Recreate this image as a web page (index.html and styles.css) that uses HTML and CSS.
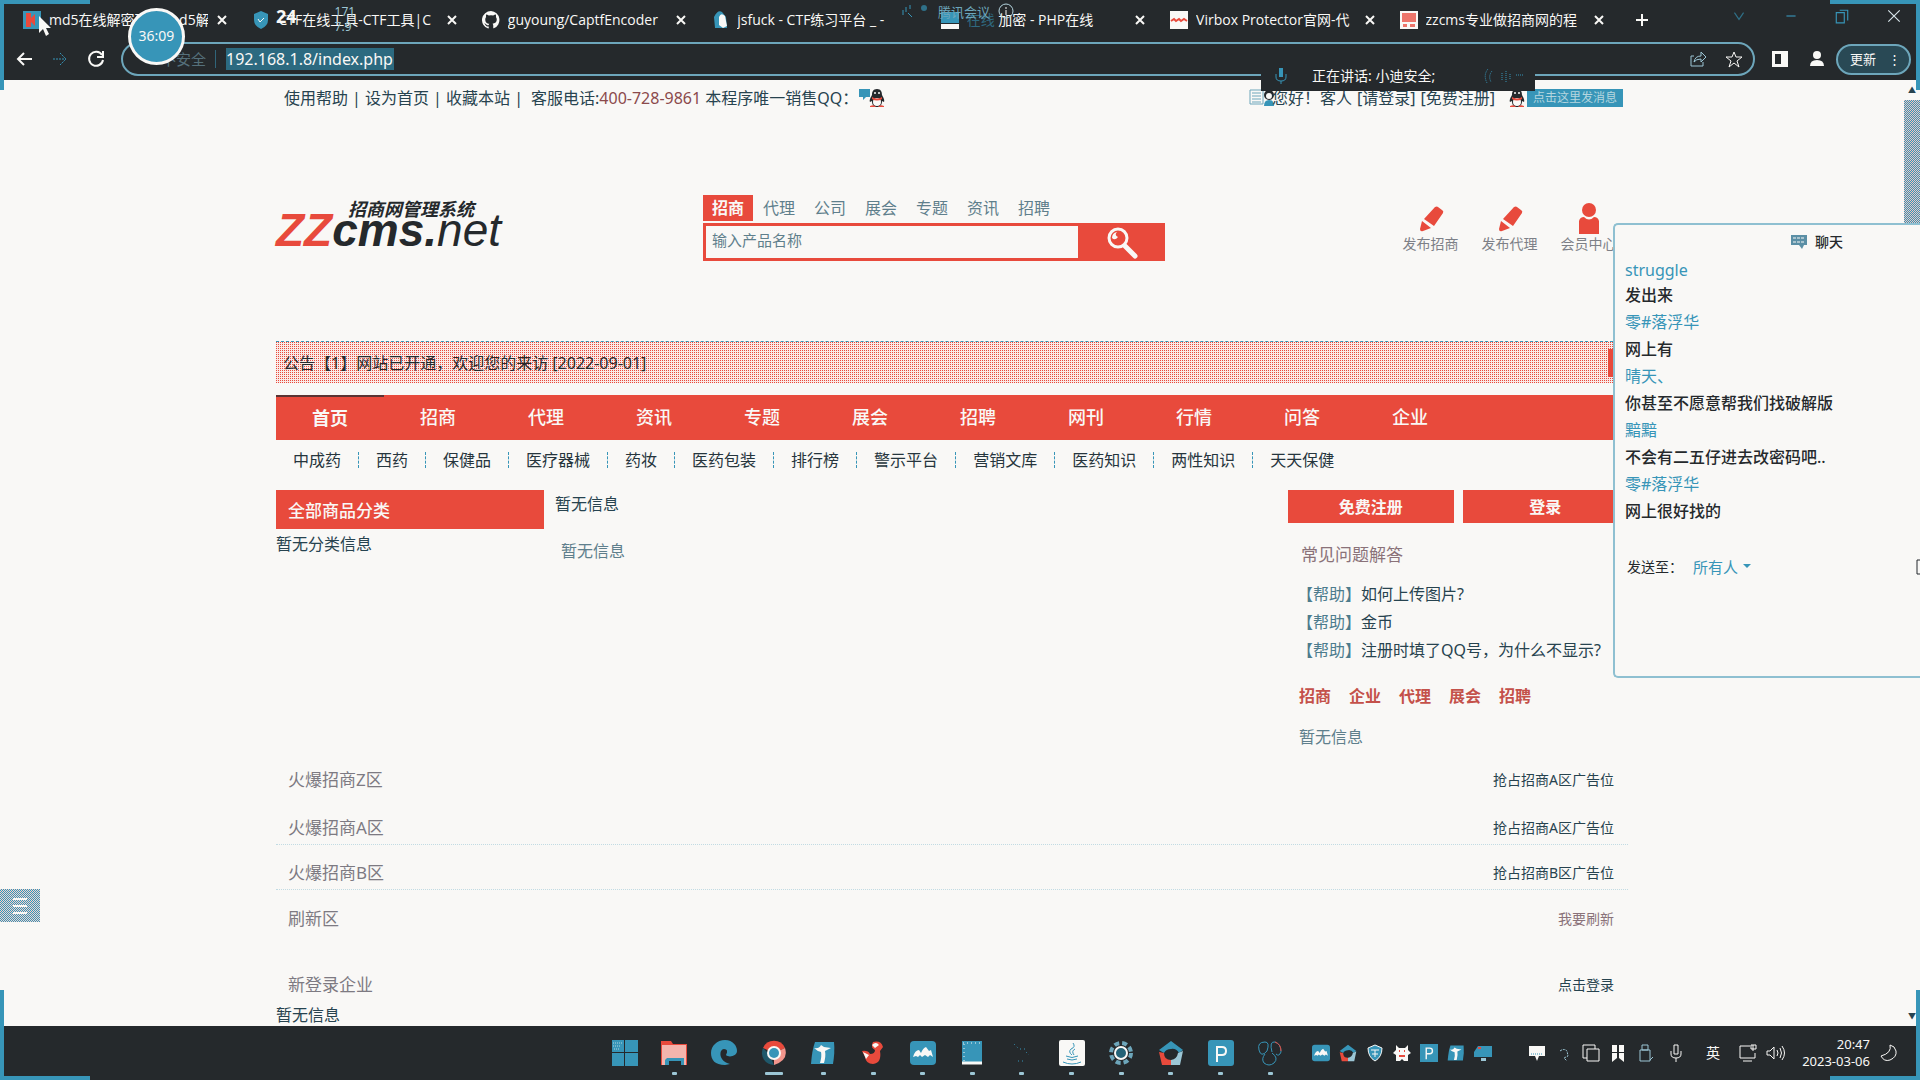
FILE: index.html
```html
<!DOCTYPE html>
<html lang="zh-CN">
<head>
<meta charset="utf-8">
<title>zzcms专业做招商网的程序</title>
<link rel="stylesheet" href="styles.css">
</head>
<body>
<svg width="0" height="0" class="defs" aria-hidden="true">
  <symbol id="close" viewBox="0 0 12 12"><path d="M2 2l8 8M10 2l-8 8" stroke="currentColor" stroke-width="2" fill="none"/></symbol>
  <symbol id="penguin" viewBox="0 0 18 20"><path d="M9 1c-4 0-5 3-5 6-1 2-3 5-2 7l2-1c0 4 2 6 5 6s5-2 5-6l2 1c1-2-1-5-2-7 0-3-1-6-5-6z" fill="#25292c"/><ellipse cx="9" cy="14" rx="4" ry="4" fill="#f9f8f6"/><path d="M4 9q5 3 10 0v2q-5 3-10 0z" fill="#e84a3c"/><path d="M2 18q4-2 6 1H2zm14 0q-4-2-6 1h6z" fill="#e84a3c"/><circle cx="7" cy="5" r="1" fill="#f9f8f6"/><circle cx="11" cy="5" r="1" fill="#f9f8f6"/></symbol>
  <symbol id="pencil" viewBox="0 0 26 26"><path d="M17 1q2-1 3 0l4 3q2 1 1 3l-9 13-10-7zM4 15l9 7-8 3q-3 1-3-2z" fill="#e84a3c"/></symbol>
  <symbol id="bird" viewBox="0 0 26 26"><path d="M5 2h19q1 10-1 22H1Q2 10 5 2z" fill="#3795b8"/><path d="M4 8q5 1 7-3l3 2 7 1-6 3q1 5-1 12h-4q2-7 1-11-4-1-7-4z" fill="#f9f8f6"/></symbol>
  <symbol id="mountain" viewBox="0 0 26 26"><rect x="0" y="1" width="26" height="24" rx="4" fill="#3795b8"/><path d="M3 17q2-7 6-7l2 3q2-5 5-6l3 4 2-1 2 7-3-2-2 2-3-2-3 2-2-2-2 2-2-1z" fill="#f9f8f6"/></symbol>
  <symbol id="ring" viewBox="0 0 26 26"><path d="M13 1l12 9-4 3q-3-5-8-4-5 0-7 4L1 10z" fill="#3795b8"/><path d="M1 12l5 1q0 7 7 7v5H4z" fill="#e84a3c"/><path d="M13 20q6-1 7-7l5-2-3 14h-9z" fill="#9cc6d5"/></symbol>
</svg>

<header class="chrome">
  <div class="tabstrip">
    <div class="tabs">
      <div class="tab"><svg class="fav" viewBox="0 0 18 18"><rect width="18" height="18" fill="#3795b8"/><path d="M3 2h5v5l4-4v12l-4-4v5H3z" fill="#e84a3c"/></svg><span class="name">md5在线解密破解,md5解</span><button aria-label="关闭"><svg><use href="#close"/></svg></button></div>
      <div class="tab"><svg class="fav" viewBox="0 0 18 18"><path d="M9 0l7 3v6q0 6-7 9-7-3-7-9V3z" fill="#3795b8"/><path d="M6 8l2 3 4-4" stroke="#f9f8f6" fill="none"/></svg><span class="name">CTF在线工具-CTF工具|C</span><button aria-label="关闭"><svg><use href="#close"/></svg></button></div>
      <div class="tab"><svg class="fav" viewBox="0 0 16 16"><path fill="#f9f8f6" d="M8 0a8 8 0 0 0-2.5 15.600c.4 0 .5-.2.5-.4v-1.500c-2.200.5-2.700-1-2.700-1-.4-.9-.9-1.200-.9-1.200-.7-.5.1-.5.1-.5.8.1 1.200.8 1.200.8.7 1.300 1.900.9 2.300.7.100-.5.300-.9.500-1.100-1.800-.2-3.600-.9-3.600-4 0-.9.300-1.600.8-2.100-.1-.2-.4-1 .1-2.100 0 0 .7-.2 2.200.8a7.500 7.500 0 0 1 4 0c1.500-1 2.200-.8 2.200-.8.5 1.100.2 1.900.1 2.100.5.500.8 1.300.8 2.100 0 3.100-1.900 3.700-3.700 3.900.3.300.6.800.6 1.500v2.200c0 .2.1.5.5.4A8 8 0 0 0 8 0z"/></svg><span class="name">guyoung/CaptfEncoder</span><button aria-label="关闭"><svg><use href="#close"/></svg></button></div>
      <div class="tab"><svg class="fav" viewBox="0 0 18 18"><path d="M3 6q4-8 8-5l4 5 1 11H4z" fill="#3795b8"/><path d="M8 6q2-5 6-1l2 10-4 2-4-3z" fill="#f9f8f6"/></svg><span class="name">jsfuck - CTF练习平台 _ -</span></div>
      <div class="tab"><svg class="fav" viewBox="0 0 18 18"><rect width="18" height="11" y="1" fill="#3795b8"/><rect width="18" height="5" y="13" fill="#f9f8f6"/></svg><span class="name"><span class="faded">在线</span> 加密 - PHP在线</span><button aria-label="关闭"><svg><use href="#close"/></svg></button></div>
      <div class="tab"><svg class="fav" viewBox="0 0 18 18"><rect width="18" height="18" fill="#f9f8f6"/><path d="M1 10l3-2 2 2 3-2 2 2 3-2 3 2" stroke="#e84a3c" stroke-width="2" fill="none"/></svg><span class="name">Virbox Protector官网-代</span><button aria-label="关闭"><svg><use href="#close"/></svg></button></div>
      <div class="tab"><svg class="fav" viewBox="0 0 18 18"><rect width="18" height="18" fill="#f9f8f6"/><path d="M2 2h14v9H2zM3 13h4v3H3zm7 0h5v3h-5z" fill="#e84a3c" opacity=".75"/></svg><span class="name">zzcms专业做招商网的程</span><button aria-label="关闭"><svg><use href="#close"/></svg></button></div>
    </div>
    <button class="newtab" aria-label="新标签页"><svg viewBox="0 0 14 14"><path d="M7 1v12M1 7h12" stroke="#f9f8f6" stroke-width="2"/></svg></button>
    <div class="wincontrols">
      <button aria-label="搜索标签页"><svg viewBox="0 0 14 14"><path d="M3 4l4 6 4-6" stroke="#2f7088" fill="none"/></svg></button>
      <button aria-label="最小化"><svg viewBox="0 0 14 14"><path d="M3 7h8" stroke="#3795b8" stroke-width="1"/></svg></button>
      <button aria-label="还原"><svg viewBox="0 0 14 14"><path d="M2 4h7v9H2zM5 2h7v9" stroke="#3795b8" fill="none"/></svg></button>
      <button aria-label="关闭窗口"><svg viewBox="0 0 14 14"><path d="M2 2l10 10M12 2L2 12" stroke="#d9e7ec" fill="none"/></svg></button>
    </div>
  </div>
  <div class="toolbar">
    <button aria-label="后退"><svg viewBox="0 0 18 18"><path d="M17 9H3M9 3L3 9l6 6" stroke="#f9f8f6" stroke-width="2" fill="none"/></svg></button>
    <button aria-label="前进"><svg viewBox="0 0 18 18"><path d="M2 9h13M9 3l6 6-6 6" stroke="#3795b8" stroke-dasharray="2 1" fill="none"/></svg></button>
    <button aria-label="刷新"><svg viewBox="0 0 18 18"><path d="M15 5a7 7 0 1 0 1 5M16 1v6h-6" stroke="#f9f8f6" stroke-width="2" fill="none"/></svg></button>
    <div class="omnibox">
      <span class="insecure">不安全</span><span class="bar"></span>
      <input class="url" aria-label="地址" value="192.168.1.8/index.php">
      <button class="share" aria-label="分享"><svg viewBox="0 0 18 18"><path d="M5 6H2v10h12v-4M5 12q1-6 7-6V2l5 5-5 5V9q-5 0-7 3z" stroke="#9cc6d5" fill="none"/></svg></button>
      <button aria-label="收藏"><svg viewBox="0 0 18 18"><path d="M9 2l2 5h6l-5 4 2 6-5-4-5 4 2-6-5-4h6z" stroke="#f9f8f6" fill="none"/></svg></button>
    </div>
    <button class="side" aria-label="侧边栏"><svg viewBox="0 0 18 18"><path d="M1 1h16v16H1zM4 4v10h6V4z" fill="#f9f8f6" fill-rule="evenodd"/></svg></button>
    <button class="user" aria-label="用户"><svg viewBox="0 0 18 18"><circle cx="9" cy="5" r="4" fill="#f9f8f6"/><path d="M2 16q0-6 7-6t7 6z" fill="#f9f8f6"/></svg></button>
    <button class="update">更新<span>⋮</span></button>
  </div>
</header>

<main class="viewport">
  <div class="site">
    <div class="topbar">
      <a href="#">使用帮助</a><i>|</i><a href="#">设为首页</a><i>|</i><a href="#">收藏本站</a><i>|</i>
      <span class="phone">客服电话:<b>400-728-9861</b> 本程序唯一销售QQ：</span>
      <svg class="qqchat" viewBox="0 0 28 20"><path d="M1 1h11v8H8l-3 3V9H1z" fill="#3795b8"/><use href="#penguin" x="10" width="18" height="20"/></svg>
      <div class="account">
        <svg viewBox="0 0 28 18"><path d="M1 1h13v14H1zM3 4h9M3 7h9M3 10h9M3 13h9" stroke="#6da6bb" fill="none"/><circle cx="20" cy="6" r="5" fill="#25292c"/><circle cx="20" cy="7" r="3" fill="#f9f8f6"/><path d="M15 17q0-6 5-6t5 6z" fill="#3795b8"/></svg>
        <span>您好！客人</span> <a href="#">[请登录]</a> <a href="#">[免费注册]</a>
        <a class="qqbtn" href="#"><svg viewBox="0 0 18 20"><use href="#penguin"/></svg><span>点击这里发消息</span></a>
      </div>
    </div>

    <div class="head">
      <h1 class="logo"><small>招商网管理系统</small><span><b class="zz">ZZ</b><b>cms.</b>net</span></h1>
      <form class="search" onsubmit="return false">
        <nav><a class="on" href="#">招商</a><a href="#">代理</a><a href="#">公司</a><a href="#">展会</a><a href="#">专题</a><a href="#">资讯</a><a href="#">招聘</a></nav>
        <div class="box"><input type="text" aria-label="产品名称" placeholder="输入产品名称"><button aria-label="搜索"><svg viewBox="0 0 34 34"><circle cx="13" cy="12" r="9" stroke="#f9f8f6" stroke-width="3" fill="none"/><path d="M20 20l10 10" stroke="#f9f8f6" stroke-width="5" stroke-linecap="round"/><path d="M7 12q0-5 5-6-3 3 1 5-3 4-6 1z" fill="#f9f8f6"/></svg></button></div>
      </form>
      <div class="quick">
        <a href="#"><svg viewBox="0 0 26 26"><use href="#pencil"/></svg>发布招商</a>
        <a href="#"><svg viewBox="0 0 26 26"><use href="#pencil"/></svg>发布代理</a>
        <a href="#"><svg class="member" viewBox="0 0 22 32"><circle cx="11" cy="7" r="7" fill="#e84a3c"/><path d="M1 31V18q1-4 5-4 5 5 10 0 4 0 5 4v13z" fill="#e84a3c"/></svg>会员中心</a>
      </div>
    </div>

    <div class="notice"><a href="#">公告【1】网站已开通，欢迎您的来访 [2022-09-01]</a><button aria-label="关闭公告"></button></div>

    <nav class="mainnav"><a class="on" href="#">首页</a><a href="#">招商</a><a href="#">代理</a><a href="#">资讯</a><a href="#">专题</a><a href="#">展会</a><a href="#">招聘</a><a href="#">网刊</a><a href="#">行情</a><a href="#">问答</a><a href="#">企业</a></nav>
    <nav class="subnav"><a href="#">中成药</a><a href="#">西药</a><a href="#">保健品</a><a href="#">医疗器械</a><a href="#">药妆</a><a href="#">医药包装</a><a href="#">排行榜</a><a href="#">警示平台</a><a href="#">营销文库</a><a href="#">医药知识</a><a href="#">两性知识</a><a href="#">天天保健</a></nav>

    <div class="cols">
      <section class="cats"><h2>全部商品分类</h2><p>暂无分类信息</p></section>
      <section class="news"><p>暂无信息</p><p class="second">暂无信息</p></section>
      <aside class="rail">
        <div class="btns"><button>免费注册</button><button>登录</button></div>
        <h3>常见问题解答</h3>
        <ul>
          <li><a href="#"><span>【帮助】</span>如何上传图片?</a></li>
          <li><a href="#"><span>【帮助】</span>金币</a></li>
          <li><a href="#"><span>【帮助】</span>注册时填了QQ号，为什么不显示?</a></li>
        </ul>
        <nav><a href="#">招商</a><a href="#">企业</a><a href="#">代理</a><a href="#">展会</a><a href="#">招聘</a></nav>
        <p>暂无信息</p>
      </aside>
    </div>

    <div class="zone first"><h3>火爆招商Z区</h3><a href="#">抢占招商A区广告位</a></div>
    <div class="zone lined"><h3>火爆招商A区</h3><a href="#">抢占招商A区广告位</a></div>
    <div class="zone lined"><h3>火爆招商B区</h3><a href="#">抢占招商B区广告位</a></div>
    <div class="zone tall"><h3>刷新区</h3><a class="soft" href="#">我要刷新</a></div>
    <div class="zone last"><h3>新登录企业</h3><a href="#">点击登录</a></div>
    <p class="none">暂无信息</p>
  </div>
  <div class="scroll"><span>▲</span><div class="thumb"></div><span class="down">▼</span></div>
</main>

<footer class="taskbar">
  <div class="apps">
    <button aria-label="开始"><svg viewBox="0 0 26 26"><path d="M0 0h12v12H0zM13 0h13v12H13zM0 13h12v13H0zM13 13h13v13H13z" fill="#3795b8"/><path d="M1 3h9M1 6h8M2 9h6" stroke="#b5d5df" stroke-dasharray="1 1"/></svg></button>
    <button class="run" aria-label="文件"><svg viewBox="0 0 26 26"><path d="M0 1h10l2 3h14v21H0z" fill="#e84a3c"/><path d="M1 5h24v20H1z" fill="#f4b5ad"/><path d="M4 25v-5l2-2h17v7z" fill="#3795b8"/><path d="M8 21h12v4H8z" fill="#25292c"/></svg></button>
    <button aria-label="Edge"><svg viewBox="0 0 26 26"><path d="M14 25C4 25 0 20 0 13S6 0 14 0s12 6 12 11-8 7-11 4q3-6-2-6c-5 0-6 12 6 15z" fill="#3795b8"/></svg></button>
    <button class="run wide" aria-label="Chrome"><svg viewBox="0 0 26 26"><path d="M2 8a12 12 0 0 1 22 0l-11 5z" fill="#e84a3c"/><path d="M2 8l6 6 5 11A12 12 0 0 1 2 8z" fill="#1f586b"/><path d="M24 8q4 12-11 17V13z" fill="#f2958c"/><circle cx="13" cy="13" r="7" fill="#f9f8f6"/><circle cx="13" cy="13" r="5" fill="#3795b8"/></svg></button>
    <button class="run" aria-label="笔记"><svg viewBox="0 0 26 26"><use href="#bird"/></svg></button>
    <button class="run" aria-label="工具"><svg viewBox="0 0 26 26"><path d="M13 2q8-2 10 5l-3 4q2 12-7 13-7 0-8-7l-3-6q6-1 8 3 5 0 5-4-5-3-2-8z" fill="#e84a3c"/><path d="M3 12l6 3-3 4zM12 5q4-4 7 0l-4 3z" fill="#f9f8f6"/></svg></button>
    <button class="run" aria-label="会议"><svg viewBox="0 0 26 26"><use href="#mountain"/></svg></button>
    <button class="run" aria-label="记事本"><svg viewBox="0 0 26 26"><path d="M3 1h20v22H3z" fill="#3795b8"/><path d="M3 23h20" stroke="#f9f8f6" stroke-width="3"/><path d="M4 3h18M5 4v17" stroke="#f9f8f6" stroke-dasharray="1 3"/></svg></button>
    <button class="run" aria-label="终端"><svg viewBox="0 0 26 26"><path d="M5 4l4 4M11 9h5M17 12l3 3M9 21h8" stroke="#3795b8" stroke-dasharray="1 3"/></svg></button>
    <button class="run" aria-label="Java"><svg viewBox="0 0 26 26"><rect width="26" height="26" rx="2" fill="#f9f8f6"/><path d="M14 3q3 4-2 6-3 3 1 6M16 9q-4 2-1 6M7 16q6 3 12 0M8 19q5 2 10 0M4 22q9 4 18 0" stroke="#3795b8" stroke-width="1" fill="none"/></svg></button>
    <button class="run" aria-label="设置"><svg viewBox="0 0 26 26"><circle cx="13" cy="13" r="10" fill="none" stroke="#6da6bb" stroke-width="4" stroke-dasharray="5 3"/><circle cx="13" cy="13" r="6" stroke="#f9f8f6" stroke-width="2" fill="#236277"/></svg></button>
    <button class="run" aria-label="浏览器"><svg viewBox="0 0 26 26"><use href="#ring"/></svg></button>
    <button class="run" aria-label="P"><svg viewBox="0 0 26 26"><rect width="26" height="26" rx="3" fill="#3795b8"/><path d="M9 22V7h5q4 0 4 4t-4 4h-4" stroke="#f9f8f6" stroke-width="2" fill="none"/></svg></button>
    <button class="run" aria-label="抓包"><svg viewBox="0 0 26 26"><path d="M10 11Q4 18 2 10t6-8q5 0 2 9zM15 12q-3-11 3-10 6 2 6 10-2 5-5 2M8 14q-4 5-1 9 5 4 10 0 5-5-2-10" stroke="#3795b8" stroke-width="1" fill="none"/><path d="M18 2q6 2 6 9" stroke="#e84a3c" stroke-width="1" fill="none"/></svg></button>
  </div>
  <div class="tray">
    <svg viewBox="0 0 26 26"><use href="#mountain"/></svg>
    <svg viewBox="0 0 26 26"><use href="#ring"/></svg>
    <svg viewBox="0 0 18 18"><path d="M9 1l7 3q0 9-7 13-7-4-7-13z" fill="#3795b8" stroke="#f9f8f6"/><path d="M5 6h8M9 6v7M6 10h6" stroke="#f9f8f6"/></svg>
    <svg viewBox="0 0 18 18"><path d="M3 1l3 3h6l3-3v5l3 3-3 2v6h-4l-2-2-2 2H3v-6L0 9l3-3z" fill="#f9f8f6"/><path d="M6 7h1M11 7h1M6 12h6" stroke="#e84a3c" stroke-width="2"/></svg>
    <svg viewBox="0 0 26 26"><rect width="26" height="26" fill="#3795b8"/><path d="M9 22V6h5q4 0 4 4t-4 4h-4" stroke="#f9f8f6" stroke-width="2" fill="none"/></svg>
    <svg viewBox="0 0 26 26"><use href="#bird"/></svg>
    <svg viewBox="0 0 18 18"><path d="M4 2h14v11H0V8z" fill="#3795b8"/><path d="M7 14h5v3H7z" fill="#9cc6d5"/><path d="M4 4h3" stroke="#e84a3c" stroke-width="2"/></svg>
  </div>
  <div class="tray system">
    <svg viewBox="0 0 18 18"><path d="M1 2h16v10H1zM7 12h4l-2 5z" fill="#f9f8f6"/><path d="M3 10h12" stroke="#3795b8" stroke-dasharray="1 1"/></svg>
    <svg viewBox="0 0 18 18"><path d="M5 7q4-3 7 0l1 5-4 2 3 3" stroke="#9cc6d5" stroke-dasharray="2 1" fill="none"/></svg>
    <svg viewBox="0 0 18 18"><path d="M5 5h12v12H5zM5 14H1V1h12v4" stroke="#f9f8f6" fill="none"/></svg>
    <svg viewBox="0 0 18 18"><path d="M3 1h5v7H3zM10 1h5v7h-5zM3 9h5v5l-5 4zM10 9h5v9l-5-4z" fill="#f9f8f6"/></svg>
    <svg viewBox="0 0 18 18"><path d="M6 1h6v5H6zM4 6h10v11H4zM14 16l3-3" stroke="#9cc6d5" fill="none"/></svg>
  </div>
  <svg class="mic" viewBox="0 0 18 18"><path d="M7 1h4v9H7zM4 7v3q0 4 5 4t5-4V7M9 14v4" stroke="#f9f8f6" fill="none"/></svg>
  <span class="ime">英</span>
  <svg class="net" viewBox="0 0 18 18"><path d="M11 2H1v12h15V9M4 17h9M14 1v6M12 1h5v4h-5z" stroke="#f9f8f6" fill="none"/></svg>
  <svg class="vol" viewBox="0 0 20 18"><path d="M1 7h3l4-4v12l-4-4H1zM11 6q2 3 0 6M14 4q3 5 0 10M16 2q5 7 0 14" stroke="#f9f8f6" fill="none"/></svg>
  <time>20:47<br>2023-03-06</time>
  <svg class="moon" viewBox="0 0 18 18"><path d="M10 1q2 8-9 11 3 6 9 4 7-3 6-9-1-5-6-6z" stroke="#f9f8f6" fill="none"/></svg>
</footer>

<aside class="chat">
  <h2><svg viewBox="0 0 16 16"><path d="M0 1h16v10h-3l-2 4-3-4H0z" fill="#5b8fa5"/><path d="M2 4h12M2 8h12" stroke="#f9f8f6" stroke-dasharray="3 1"/></svg>聊天</h2>
  <dl>
    <dt>struggle</dt><dd>发出来</dd>
    <dt>零#落浮华</dt><dd>网上有</dd>
    <dt>晴天、</dt><dd>你甚至不愿意帮我们找破解版</dd>
    <dt>黯黯</dt><dd>不会有二五仔进去改密码吧..</dd>
    <dt>零#落浮华</dt><dd>网上很好找的</dd>
  </dl>
  <div class="sendto"><label for="to">发送至：</label><select id="to"><option>所有人</option></select><span class="caret"></span><svg viewBox="0 0 4 16"><path d="M4 1H1v14h3" stroke="#25292c" fill="none"/></svg></div>
</aside>

<div class="speaker"><svg viewBox="0 0 14 18"><path d="M5 1h4v9H5z" fill="#3795b8"/><path d="M2 7v3q0 4 5 4t5-4V7M7 14v3" stroke="#3795b8" fill="none"/></svg><span>正在讲话: 小迪安全;</span><svg class="wave" viewBox="0 0 44 20"><path d="M6 3q-5 6-1 14M10 5q-4 5-1 11M20 7v8M24 5v11M28 8v6M34 9h8" stroke="#3795b8" stroke-dasharray="1 1" fill="none"/></svg></div>
<div class="clock">36:09</div>
<div class="stats"><b>24</b><span>171<br>7.9</span></div>
<div class="meeting"><svg viewBox="0 0 30 18"><path d="M3 8v5M6 5v5M10 3v4M8 11l4 4" stroke="#3795b8"/><circle cx="24" cy="6" r="3" fill="#2f7088"/></svg>腾讯会议<svg class="info" viewBox="0 0 16 16"><circle cx="8" cy="8" r="7" stroke="#b5d5df" fill="none"/><path d="M8 4v2M8 7v5" stroke="#f9f8f6"/></svg></div>
<div class="float"><svg viewBox="0 0 20 20"><path d="M3 3h14M3 10h14M3 17h14" stroke="#f9f8f6" stroke-width="2"/></svg></div>
<svg class="pointer" viewBox="0 0 14 20"><path d="M1 0l12 12H8l3 6-3 2-3-7-4 4z" fill="#f9f8f6"/></svg>
<div class="corner tl"></div><div class="corner tr"></div><div class="corner bl"></div><div class="corner br"></div>
</body>
</html>
```
FILE: styles.css
```css
:root {
  --dark: #25292c;
  --teal: #3795b8;
  --red: #e84a3c;
  --light: #f9f8f6;
  --ink: #27434f;
  --soft: #5f7f8c;
}
* { box-sizing: border-box; margin: 0; padding: 0; }
body {
  display: flex;
  flex-direction: column;
  height: 100vh;
  overflow: hidden;
  background: var(--light);
  color: var(--ink);
  font: 16px/22px "Noto Sans", "Noto Sans CJK SC", sans-serif;
}
a { color: inherit; text-decoration: none; }
i { font-style: normal; }
button, input, select { font: inherit; color: inherit; border: 0; background: none; outline: 0; }
svg { display: block; flex: none; }
ul { list-style: none; }
.defs { position: absolute; }

/* browser chrome */
.chrome { background: var(--dark); color: var(--light); height: 80px; flex: none; }
.tabstrip { display: flex; height: 40px; padding-left: 8px; }
.tabs { display: flex; flex: 1; min-width: 0; }
.tab { flex: 1; min-width: 0; display: flex; align-items: center; padding: 0 9px 0 15px; gap: 8px; font-family: "Open Sans", "Noto Sans CJK SC", sans-serif; font-size: 14px; }
.tab .fav { width: 18px; height: 18px; }
.tab .name { flex: 1; overflow: hidden; white-space: nowrap; }
.tab button svg { width: 12px; height: 12px; }
.faded { color: var(--teal); opacity: .6; }
.newtab { width: 56px; padding-left: 21px; }
.newtab svg { width: 14px; }
.wincontrols { display: flex; width: 250px; padding-left: 43px; height: 32px; }
.wincontrols button { width: 52px; display: grid; place-items: center; }
.wincontrols svg { width: 16px; }
.toolbar { display: flex; align-items: center; height: 38px; padding: 0 9px 0 6px; }
.toolbar button { width: 36px; display: grid; place-items: center; }
.toolbar > button svg, .omnibox button svg { width: 18px; height: 18px; }
.omnibox { flex: 1; display: flex; align-items: center; height: 34px; margin-left: 7px; border: 2px solid #6da6bb; border-radius: 17px; padding: 0 1px 0 38px; }
.insecure { color: #55707b; font-size: 15px; width: 54px; }
.bar { width: 1px; height: 18px; background: #30657a; margin-right: 10px; }
.url { width: 168px; height: 22px; font-size: 16px; background: #2c6a80; color: var(--light); }
.omnibox .share { margin-left: auto; }
.toolbar .side { margin-left: 7px; }
.toolbar .user { width: 38px; }
.toolbar .update { display: flex; justify-content: space-between; align-items: center; width: 75px; height: 31px; border: 2px solid #6da6bb; border-radius: 16px; padding: 0 8px 0 12px; font-size: 13px; background: #294955; }

/* page */
.viewport { flex: 1; min-height: 0; display: flex; overflow: hidden; }
.site { flex: 1; max-width: 1352px; margin: 0 auto; }
.topbar { display: flex; align-items: center; height: 36px; padding: 0 5px 0 8px; }
.topbar i { width: 17px; text-align: center; }
.phone { margin-left: 4px; }
.phone b { font-weight: 400; color: #8b4a4c; }
.qqchat { width: 28px; height: 20px; }
.account { margin-left: auto; display: flex; align-items: center; gap: 5px; white-space: nowrap; }
.account > svg { width: 28px; height: 18px; margin-right: -10px; }
.qqbtn { display: flex; align-items: center; margin-left: 7px; color: #b5d5df; font-size: 12px; line-height: 18px; }
.qqbtn svg { width: 20px; height: 20px; }
.qqbtn span { width: 96px; background: var(--teal); text-align: center; }

.head { display: flex; padding: 79px 0 80px; height: 225px; }
.logo { width: 427px; font: italic 46px/46px "Liberation Sans", sans-serif; color: var(--dark); padding-top: 7px; }
.logo small { display: block; font: italic bold 18px/16px "Liberation Sans", "Noto Sans CJK SC", sans-serif; padding-left: 72px; height: 5px; }
.logo span { display: block; }
.logo .zz { color: var(--red); }
.search { width: 462px; }
.search nav { display: flex; gap: 1px; height: 28px; color: var(--soft); }
.search nav a { padding: 0 9px; line-height: 26px; height: 26px; }
.search nav .on { background: var(--red); color: var(--light); font-weight: 700; }
.box { display: flex; height: 38px; border: 3px solid var(--red); border-right: 0; }
.box input { flex: 1; min-width: 0; padding: 0 6px 4px; font-size: 15px; }
.box input::placeholder { color: var(--soft); opacity: 1; }
.box button { width: 87px; background: var(--red); display: grid; place-items: center; }
.box svg { width: 34px; height: 34px; }
.quick { margin-left: auto; display: flex; padding-top: 10px; }
.quick a { width: 79px; display: flex; flex-direction: column; align-items: center; justify-content: flex-end; font-size: 14px; line-height: 18px; color: #7d8087; height: 48px; }
.quick svg { width: 26px; height: 26px; margin-bottom: 3px; }
.quick .member { width: 22px; height: 32px; margin-bottom: 0; }

.notice { display: flex; align-items: center; justify-content: space-between; height: 42px; margin-bottom: 12px; padding-left: 7px; color: var(--dark); border-top: 1px dashed var(--teal); background: conic-gradient(from 270deg at 1px 1px, var(--red) 90deg, #f9eae7 0) 0 0 / 2px 2px; }
.notice button { width: 20px; height: 28px; background: var(--red); }
.mainnav { display: flex; height: 45px; background: var(--red); color: var(--light); }
.mainnav a { width: 108px; text-align: center; font-size: 18px; font-weight: 500; line-height: 45px; }
.mainnav .on { font-weight: 700; border-top: 2px solid #5a3433; line-height: 42px; }
.subnav { display: flex; height: 40px; align-items: center; margin-bottom: 10px; color: #26353d; }
.subnav a { padding: 0 17px; line-height: 16px; }
.subnav a + a { border-left: 1px dashed var(--teal); }

.cols { display: flex; min-height: 273px; }
.cats { width: 268px; }
.cats h2 { height: 39px; background: var(--red); color: var(--light); font: 500 17px/39px "Noto Sans CJK SC", sans-serif; padding-left: 12px; }
.cats p { line-height: 30px; }
.news { flex: 1; padding: 3px 0 0 11px; }
.news .second { padding: 25px 0 0 6px; color: var(--soft); }
.rail { width: 340px; }
.btns { display: flex; gap: 9px; }
.btns button { flex: 1; height: 33px; background: var(--red); color: var(--light); font-weight: 700; }
.rail h3 { font: 17px/24px "Noto Sans CJK SC", sans-serif; color: #8a7279; padding: 19px 0 0 13px; }
.rail ul { padding: 14px 0 0 9px; margin-bottom: 21px; }
.rail li { line-height: 28px; white-space: nowrap; }
.rail li span { color: #4d7c8d; }
.rail nav { display: flex; gap: 18px; padding-left: 11px; color: #c4514a; font-weight: 700; }
.rail p { padding: 19px 0 0 11px; color: var(--soft); }

.zone { display: flex; justify-content: space-between; align-items: center; height: 33px; margin-bottom: 12px; padding: 0 14px 0 12px; }
.zone h3 { font: 17px/24px "Noto Sans", "Noto Sans CJK SC", sans-serif; color: #7d7a82; }
.zone a { font-size: 14px; }
.zone .soft { color: #8a7279; }
.zone.first { margin-bottom: 16px; }
.zone.lined { border-bottom: 1px dotted #c2dbe3; }
.zone.tall { margin-bottom: 33px; }
.zone.last { margin-bottom: 3px; }

.scroll { width: 16px; display: flex; flex-direction: column; align-items: center; font-size: 8px; line-height: 20px; }
.thumb { width: 16px; height: 125px; background: repeating-conic-gradient(var(--teal) 0 25%, #efc5c0 0 50%) 0 0 / 2px 2px; }
.scroll .down { margin-top: auto; }

/* taskbar */
.taskbar { flex: none; height: 54px; display: flex; align-items: center; justify-content: flex-end; background: var(--dark); color: var(--light); padding-right: 22px; }
.apps { display: flex; width: 695px; margin-right: 13px; }
.apps button { flex: 1; height: 54px; display: flex; flex-direction: column; align-items: center; padding-top: 14px; }
.apps svg { width: 26px; height: 26px; }
.run::after { content: ""; width: 5px; height: 3px; margin-top: 6px; border-radius: 1px; background: #9cc6d5; }
.run.wide::after { width: 18px; }
.tray { display: flex; gap: 9px; padding: 0 4px; }
.tray svg { width: 18px; height: 18px; }
.system { margin-left: 28px; }
.mic { width: 18px; margin-left: 9px; }
.ime { font-size: 14px; margin-left: 21px; }
.net { width: 18px; margin-left: 19px; }
.vol { width: 20px; margin-left: 9px; }
time { width: 76px; margin-left: 8px; text-align: right; font-size: 13px; line-height: 17px; white-space: nowrap; display: block; }
.moon { width: 18px; margin-left: 10px; }

/* overlays */
.chat { position: absolute; right: 0; top: 223px; width: 307px; height: 455px; border: 2px solid #8fc0d1; border-right: 0; border-radius: 5px 0 0 5px; background: var(--light); color: var(--dark); padding: 6px 0 0 10px; }
.chat h2 { display: flex; gap: 8px; font-size: 14px; font-weight: 500; padding-left: 166px; height: 27px; }
.chat h2 svg { width: 16px; height: 16px; margin-top: 3px; }
.chat dl { line-height: 27px; }
.chat dt { color: var(--teal); }
.chat dt:first-child { line-height: 24px; }
.chat dd { font-weight: 500; }
.sendto { display: flex; align-items: center; margin-top: 31px; font-size: 14px; padding-left: 2px; }
.sendto label { width: 66px; }
.sendto select { appearance: none; color: var(--teal); font-size: 15px; width: 50px; }
.caret { border: 4px solid transparent; border-top-color: var(--teal); margin-top: 2px; }
.sendto svg { width: 4px; height: 16px; margin-left: auto; }
.speaker { position: absolute; left: 1261px; top: 60px; width: 274px; height: 31px; padding: 0 9px 8px 13px; padding-bottom: 0; background: var(--dark); color: var(--light); display: flex; align-items: center; font-size: 14px; white-space: nowrap; }
.speaker svg { width: 14px; height: 18px; margin-right: 24px; }
.speaker .wave { width: 44px; height: 20px; margin: 0 0 0 auto; }
.clock { position: absolute; left: 128px; top: 8px; width: 57px; height: 57px; border: 3px solid var(--light); border-radius: 50%; background: var(--teal); color: var(--light); font-size: 14px; line-height: 50px; text-align: center; }
.stats { position: absolute; left: 276px; top: 4px; display: flex; gap: 38px; color: var(--light); font-size: 18px; line-height: 24px; }
.stats span { font-size: 12px; line-height: 15px; color: #9cc6d5; }
.meeting { position: absolute; left: 900px; top: 2px; display: flex; gap: 8px; color: #6da6bb; font-size: 13px; line-height: 20px; }
.meeting svg { width: 30px; height: 18px; }
.meeting .info { width: 16px; height: 18px; }
.float { position: absolute; left: 0; top: 889px; width: 40px; height: 33px; display: grid; place-items: center; background: repeating-conic-gradient(var(--teal) 0 25%, #f3d3cf 0 50%) 0 0 / 2px 2px; }
.float svg { width: 20px; height: 20px; }
.pointer { position: absolute; left: 38px; top: 16px; width: 14px; height: 20px; }
.corner { position: absolute; width: 90px; height: 90px; border: 0 solid var(--teal); pointer-events: none; }
.tl { left: 0; top: 0; border-width: 4px 0 0 4px; }
.tr { right: 0; top: 0; border-width: 4px 4px 0 0; }
.bl { left: 0; bottom: 0; border-width: 0 0 4px 4px; }
.br { right: 0; bottom: 0; border-width: 0 4px 4px 0; }
```
